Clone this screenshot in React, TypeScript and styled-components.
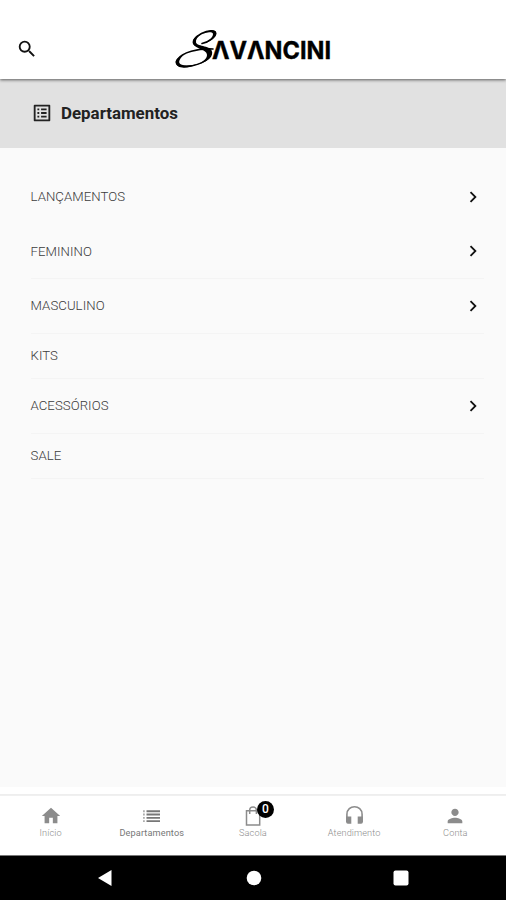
import React from "react";
import styled, { createGlobalStyle } from "styled-components";
import {
  MdSearch,
  MdChevronRight,
  MdHome,
  MdPerson,
  MdOutlineListAlt,
} from "react-icons/md";

const GlobalStyle = createGlobalStyle`
  * { box-sizing: border-box; }
  body { margin: 0; background: #fff; font-family: Roboto, "Liberation Sans", sans-serif; }
`;

const Screen = styled.div`
  display: flex;
  flex-direction: column;
  width: 506px;
  height: 900px;
  background: #fafafa;
  overflow: hidden;
`;

const Header = styled.header`
  display: grid;
  grid-template-columns: 1fr 156px 1fr;
  align-items: end;
  height: 79px;
  flex: none;
  padding: 0 15px 9px 15.5px;
  background: #fff;
  box-shadow: 0 1px 3px rgba(0, 0, 0, 0.6);
  z-index: 1;
`;

const SearchButton = styled.button`
  display: flex;
  width: 22px;
  height: 22px;
  margin-bottom: 10px;
  padding: 0;
  border: 0;
  background: none;
  color: #111;
  font-size: 22px;
`;

const LogoArt = styled.svg`
  display: block;
  width: 156px;
  height: 40px;
  overflow: visible;
`;

const LogoText = styled.text`
  font-family: Inter, sans-serif;
  font-size: 24px;
  font-weight: 700;
  stroke: #000;
  stroke-width: 0.4px;
`;

const Banner = styled.div`
  display: flex;
  align-items: center;
  gap: 8px;
  height: 69px;
  flex: none;
  padding: 0 31px 1px;
  background: #e1e1e1;
  color: #222;
  svg { font-size: 22px; }
`;

const Title = styled.h1`
  margin: 0;
  font-size: 16.9px;
  font-weight: 700;
  line-height: 20px;
`;

const List = styled.ul`
  flex: 1;
  margin: 0;
  padding: 22px 22.5px 0 30.5px;
  list-style: none;
`;

const Row = styled.li<{ $tall: boolean; $line: boolean }>`
  display: flex;
  align-items: center;
  justify-content: space-between;
  height: ${(p) => (p.$tall ? 54.6 : 45.4)}px;
  border-bottom: 1px solid ${(p) => (p.$line ? "#f4f4f4" : "transparent")};
  color: #3c3c3c;
  font-size: 13.2px;
  font-weight: 300;
  letter-spacing: 0.06px;
  svg { color: #111; font-size: 22px; }
`;

const TabBar = styled.nav`
  display: grid;
  grid-template-columns: repeat(5, 101.2px);
  height: 68px;
  flex: none;
  padding-top: 18px;
  background: linear-gradient(#fff 7px, #ededed 7px, #f1f1f1 9px, #fff 9px);
`;

const Tab = styled.a<{ $active?: boolean }>`
  display: flex;
  flex-direction: column;
  align-items: center;
  gap: 1px;
  color: ${(p) => (p.$active ? "#777" : "#8c8c8c")};
  font-size: 9.2px;
  font-weight: ${(p) => (p.$active ? 400 : 300)};
  line-height: 12px;
  letter-spacing: 0.1px;
`;

const TabIcon = styled.span`
  position: relative;
  display: flex;
  height: 21px;
  align-items: center;
  svg { display: block; }
`;

const Badge = styled.span`
  position: absolute;
  left: 14px;
  top: -4px;
  width: 17px;
  height: 17px;
  border-radius: 50%;
  background: #000;
  color: #fff;
  font-size: 12px;
  font-weight: 500;
  line-height: 17px;
  text-align: center;
`;

const SystemBar = styled.footer`
  display: grid;
  grid-template-columns: 104px 1fr 104px;
  align-items: center;
  height: 45px;
  flex: none;
  padding: 0 52px 0 53px;
  border-top: 1px solid #777;
  background: #000;
  svg { display: block; margin: 0 auto; }
`;

const SystemSlot = styled.div<{ $inset?: number }>`
  padding-right: ${(p) => p.$inset ?? 0}px;
`;

const Logo = () => (
  <LogoArt viewBox="0 0 156 40" role="img" aria-label="Savancini">
    <path
      d="M27 13.500C34 12 40.500 6.500 40.500 3.200C40.500 -0.200 33 0.200 26.500 3.500C20 7 16.500 11.500 19.500 14.500C23 18 35 17.500 35 24C35 31 20.500 36.500 9.500 36.500C2.500 36.500 0 33.500 2.500 29.500C7 22.500 23 18.200 38 19"
      fill="none"
      stroke="#000"
      strokeWidth="1.600"
      strokeLinecap="round"
    />
    <path
      d="M18 12C17.500 19 32 18.500 32 25C32 29 27 32.500 22 34.500C31 32.500 37.500 28 37.200 22.500C36.800 15 22.500 17 21 12.500C20.500 9.500 22.500 7 26 4C21 6 17.900 8.500 18 12ZM0.600 32C1 40 14 38.500 23 34C14 36 5.500 36 4.400 33C3.700 30.500 5.500 28 9 24.500C4 27 0.500 29.500 0.600 32ZM28 3.500C34 1.500 38 2 38 4C38 7.500 34 11 29.500 13.200C36 11.300 41.600 7 41.400 3.200C41.200 -1 34 -0.200 28 3.500Z"
      fill="#000"
    />
    <LogoText x="37" y="28.500" textLength="119" lengthAdjust="spacingAndGlyphs">
      ΛVΛNCINI
    </LogoText>
  </LogoArt>
);

const DepartmentsIcon = () => (
  <svg width="19" height="14" viewBox="0 0 19 14" fill="currentColor">
    <path d="M4.500 1.300H18V3.200H4.500ZM4.500 4.600H18V6.500H4.500ZM4.500 7.900H18V9.800H4.500ZM4.500 11.200H18V13.100H4.500Z" />
    <path
      d="M1 1.300H2.800V3.200H1ZM1 4.600H2.800V6.500H1ZM1 7.900H2.800V9.800H1ZM1 11.200H2.800V13.100H1Z"
      opacity="0.600"
    />
  </svg>
);

const BagIcon = () => (
  <svg width="20" height="22" viewBox="0 0 20 22" fill="none" stroke="currentColor" strokeWidth="1.500">
    <path d="M3.500 5.800H16.700V20H3.500Z" />
    <path d="M6.700 9V5.300C6.700 1 13.400 1 13.400 5.300V9" />
  </svg>
);

const HeadsetIcon = () => (
  <svg width="20" height="22" viewBox="0 0 20 22">
    <path
      d="M2.900 17V9.500C2.900 -0.800 18.100 -0.800 18.100 9.500V17"
      fill="none"
      stroke="currentColor"
      strokeWidth="1.600"
    />
    <path d="M2.100 11.500H7.300V18.800H3.900Q2.100 18.800 2.100 17ZM13.700 11.500H18.900V17Q18.900 18.800 17.100 18.800H13.700Z" fill="currentColor" />
  </svg>
);

const departments = [
  { name: "LANÇAMENTOS", sub: true, line: false },
  { name: "FEMININO", sub: true, line: true },
  { name: "MASCULINO", sub: true, line: true },
  { name: "KITS", sub: false, line: true },
  { name: "ACESSÓRIOS", sub: true, line: true },
  { name: "SALE", sub: false, line: true },
];

export default function App() {
  return (
    <>
      <GlobalStyle />
      <Screen>
        <Header>
          <SearchButton aria-label="Buscar"><MdSearch /></SearchButton>
          <Logo />
        </Header>
        <Banner>
          <MdOutlineListAlt />
          <Title>Departamentos</Title>
        </Banner>
        <List>
          {departments.map((d) => (
            <Row key={d.name} $tall={d.sub} $line={d.line}>
              {d.name}
              {d.sub && <MdChevronRight />}
            </Row>
          ))}
        </List>
        <TabBar>
          <Tab><TabIcon><MdHome size={22} /></TabIcon>Início</Tab>
          <Tab $active><TabIcon><DepartmentsIcon /></TabIcon>Departamentos</Tab>
          <Tab><TabIcon><BagIcon /><Badge>0</Badge></TabIcon>Sacola</Tab>
          <Tab><TabIcon><HeadsetIcon /></TabIcon>Atendimento</Tab>
          <Tab><TabIcon><MdPerson size={22} /></TabIcon>Conta</Tab>
        </TabBar>
        <SystemBar>
          <SystemSlot $inset={1}>
            <svg width="16" height="18" viewBox="0 0 16 18"><path d="M1 9L14.500 1V17Z" fill="#fff" /></svg>
          </SystemSlot>
          <SystemSlot>
            <svg width="16" height="16" viewBox="0 0 16 16"><circle cx="8" cy="8" r="7.300" fill="#fff" /></svg>
          </SystemSlot>
          <SystemSlot $inset={3}>
            <svg width="16" height="16" viewBox="0 0 16 16"><rect x="0.500" y="0.500" width="15" height="15" rx="2" fill="#fff" /></svg>
          </SystemSlot>
        </SystemBar>
      </Screen>
    </>
  );
}
